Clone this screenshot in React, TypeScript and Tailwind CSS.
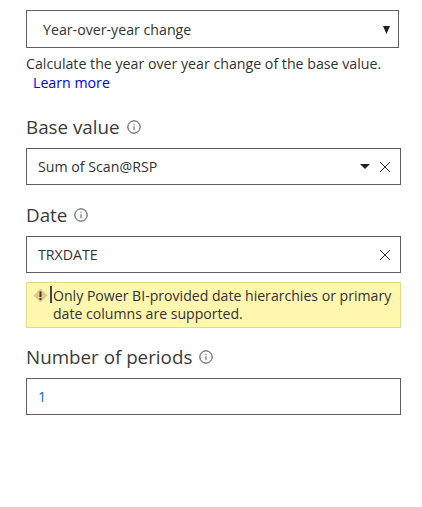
const font = "font-['Segoe_UI','Open_Sans','Noto_Sans',sans-serif]";

function Info() {
  return (
    <svg width="14" height="14" viewBox="0 0 14 14" fill="none" className="shrink-0" stroke="#444" strokeWidth="1">
      <circle cx="7" cy="7" r="6.2" />
      <path d="M7 6.2v4" stroke="#5a5a5a" />
      <path d="M7 3.8v1" stroke="#5a5a5a" />
    </svg>
  );
}

function Close() {
  return (
    <svg width="10" height="10" viewBox="0 0 10 10" fill="none" stroke="#333" strokeWidth="1">
      <path d="M0 0l10 10M10 0l-10 10" />
    </svg>
  );
}

function Label({ text }: { text: string }) {
  return (
    <div className="flex items-center gap-[7px] text-[18.8px] leading-[24px] text-[#3b3a39]">
      <span>{text}</span>
      <Info />
    </div>
  );
}

export default function App() {
  return (
    <div className={`${font} w-[422px] h-[507px] bg-white pt-[10px] pl-[26px] text-[#333] overflow-hidden`}>
      <div className="w-[373px] h-[38px] border border-[#605e5c] flex items-center justify-between pl-[16px] pr-[8px] pt-[1px] text-[14.2px]">
        <span>Year-over-year change</span>
        <svg width="7" height="8" viewBox="0 0 7 8"><path d="M0 0h7L3.5 8z" fill="#222" /></svg>
      </div>
      <div className="mt-[6px] text-[14.2px] leading-[19px] w-[375px]">
        Calculate the year over year change of the base value.
        <div className="pl-[7px] text-[#0000ee]">Learn more</div>
      </div>
      <div className="mt-[23px]"><Label text="Base value" /></div>
      <div className="mt-[9px] w-[375px] h-[37px] border border-[#605e5c] flex items-center justify-between pl-[11px] pr-[10px] text-[14.2px]">
        <span>Sum of Scan@RSP</span>
        <div className="flex items-center gap-[10px]">
          <svg width="10" height="5" viewBox="0 0 10 5"><path d="M0 0h10L5 5z" fill="#222" /></svg>
          <Close />
        </div>
      </div>
      <div className="mt-[18px]"><Label text="Date" /></div>
      <div className="mt-[9px] w-[375px] h-[37px] border border-[#605e5c] flex items-center justify-between pl-[11px] pr-[10px] text-[14.2px]">
        <span>TRXDATE</span>
        <Close />
      </div>
      <div className="relative mt-[9px] w-[375px] h-[46px] border border-[#dedc84] bg-[#fff7ae] pl-[26px] pt-[4px] text-[14.1px] leading-[18px] text-[#333]">
        <svg className="absolute left-[6px] top-[5px]" width="15" height="15" viewBox="0 0 15 15">
          <path d="M7.5 0.5L14.5 7.5L7.5 14.5L0.5 7.5z" fill="#e3c88c" />
          <path d="M7.5 3.5v5.5" stroke="#3a3a3a" strokeWidth="2" />
          <path d="M7.5 10v2" stroke="#3a3a3a" strokeWidth="2" />
        </svg>
        <span className="absolute left-[23px] top-[3px] w-[2px] h-[17px] bg-[#444]" />
        Only Power BI-provided date hierarchies or primary date columns are supported.
      </div>
      <div className="mt-[17px]"><Label text="Number of periods" /></div>
      <div className="mt-[9px] w-[375px] h-[37px] border border-[#605e5c] flex items-center pl-[11px] text-[14.2px] text-[#106ebe]">
        1
      </div>
    </div>
  );
}
